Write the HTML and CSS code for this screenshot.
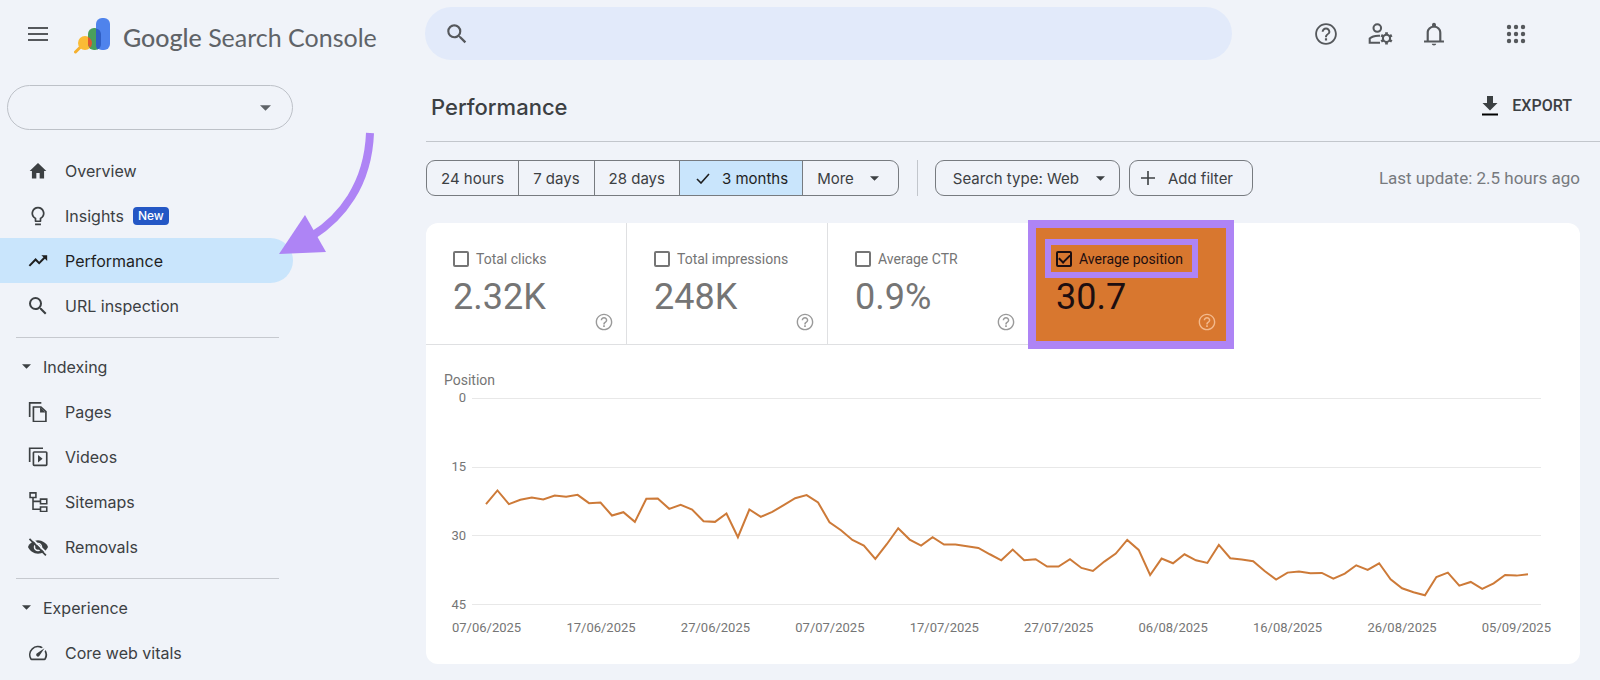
FILE: index.html
```html
<!DOCTYPE html>
<html lang="en">
<head>
<meta charset="utf-8">
<title>Google Search Console – Performance</title>
<link rel="stylesheet" href="styles.css">
</head>
<body>
<svg class="defs" aria-hidden="true">
  <symbol id="help" viewBox="0 0 24 24"><path d="M11 18h2v-2h-2v2zm1-16C6.480 2 2 6.480 2 12s4.480 10 10 10 10-4.480 10-10S17.520 2 12 2zm0 18.300c-4.600 0-8.300-3.700-8.300-8.300S7.400 3.700 12 3.700s8.300 3.700 8.300 8.300-3.700 8.300-8.300 8.300zM12 6c-2.210 0-4 1.790-4 4h1.800c0-1.200 1-2.200 2.200-2.200s2.200 1 2.200 2.200c0 2-3.100 1.750-3.100 5h1.800c0-2.250 3.100-2.500 3.100-5 0-2.210-1.790-4-4-4z"/></symbol>
  <symbol id="search" viewBox="0 0 24 24"><path d="M15.500 14h-.79l-.28-.27A6.471 6.471 0 0 0 16 9.500 6.500 6.500 0 1 0 9.500 16c1.610 0 3.090-.59 4.230-1.570l.27.28v.79l5 4.990L20.490 19l-4.990-5zm-6 0C7.010 14 5 11.990 5 9.500S7.010 5 9.500 5 14 7.010 14 9.500 11.990 14 9.500 14z"/></symbol>
  <symbol id="caret" viewBox="0 0 10 5"><path d="M0 0h10L5 5z"/></symbol>
</svg>

<header class="topbar">
  <div class="brand">
    <button class="icon-btn" aria-label="Main menu"><svg class="icon-menu" viewBox="0 0 20 14"><path d="M0 1h20M0 7h20M0 13h20" stroke="currentColor" stroke-width="2"/></svg></button>
    <a class="logo" href="#">
      <svg class="logo-mark" viewBox="0 0 36 36">
        <path d="M1.500 34l5-5" stroke="#f5b02e" stroke-width="3" stroke-linecap="round"/>
        <circle cx="11" cy="25" r="7" fill="#fabb35"/>
        <rect x="14" y="10" width="13" height="22" rx="6" fill="#4a9f5c"/>
        <path d="M14 19a7 7 0 0 1 4 6 7 7 0 0 1-2 4.700 6 6 0 0 1-2-4z" fill="#e0562f"/>
        <rect x="22" y="0" width="14" height="32" rx="6" fill="#4f83ec"/>
        <path d="M22 10.500a6 6 0 0 1 5 5.500v10a6 6 0 0 1-3.500 5.500A6 6 0 0 1 22 27z" fill="#2f5ec4"/>
      </svg>
      <span class="logo-text"><span class="logo-google">Google</span> Search Console</span>
    </a>
  </div>
  <label class="searchbox">
    <svg class="icon-search" viewBox="0 0 24 24"><use href="#search"/></svg>
    <input type="search" aria-label="Inspect any URL">
  </label>
  <div class="tools">
    <button class="icon-btn" aria-label="Help"><svg class="icon-tool" viewBox="0 0 24 24"><use href="#help"/></svg></button>
    <button class="icon-btn" aria-label="User settings"><svg class="icon-tool" viewBox="0 0 24 24" fill="none" stroke="currentColor" stroke-width="1.900"><circle cx="9.500" cy="6.500" r="3.500"/><path d="M12 13.600c-4-.3-7.500.6-9.500 2.600V20H12"/><circle cx="18" cy="16" r="3.300"/><path d="M18 10.300v2.500M18 19.200v2.500M13.100 13.200l2.200 1.200M20.700 17.600l2.200 1.200M13.100 18.800l2.200-1.200M20.700 14.400l2.200-1.200" stroke-width="2.500"/></svg></button>
    <button class="icon-btn" aria-label="Notifications"><svg class="icon-tool" viewBox="0 0 24 24"><path d="M12 22.500c1.100 0 2-.7 2-1.600h-4c0 .9.900 1.600 2 1.600zM18.800 18v-7.200c0-3.100-2-5.500-5-6.200V3.300C13.800 2.300 13 1.500 12 1.500s-1.800.8-1.800 1.800v1.300c-3 .7-5 3.100-5 6.200V18H2.800v1.900h18.400V18zm-2 0H7.200v-7.200c0-2.600 2-4.500 4.800-4.500s4.800 1.900 4.800 4.500z"/></svg></button>
    <button class="icon-btn apps" aria-label="Google apps"><svg class="icon-apps" viewBox="0 0 18 18"><g id="dots"><circle cx="2" cy="2" r="2.200"/><circle cx="9" cy="2" r="2.200"/><circle cx="16" cy="2" r="2.200"/></g><use href="#dots" y="7"/><use href="#dots" y="14"/></svg></button>
  </div>
</header>

<div class="layout">
  <aside class="sidebar">
    <button class="property" aria-label="Select property"><svg class="caret-lg"><use href="#caret"/></svg></button>
    <nav class="nav">
      <a class="item" href="#"><svg class="ico" viewBox="0 0 24 24"><path d="M10 21v-6.500h4V21h5.300v-9H22L12 2.500 2 12h2.700v9z"/></svg>Overview</a>
      <a class="item" href="#"><svg class="ico" viewBox="0 0 24 24"><path d="M8.500 23h7v-2h-7zM12 .8A7.800 7.800 0 0 0 8 15.300V18c0 .8.500 1.300 1.200 1.300h5.600c.7 0 1.200-.5 1.200-1.300V15.300A7.800 7.800 0 0 0 12 .8zm2.900 13-.9.600v2.900h-4v-2.900l-.9-.6A5.800 5.800 0 1 1 14.900 13.800z"/></svg>Insights<span class="badge">New</span></a>
      <a class="item active" href="#" aria-current="page"><svg class="ico" viewBox="0 0 24 24"><path d="M16 5l2.600 2.600-5.200 5.200-4.300-4.300L.8 17l1.700 1.700 6.600-6.700 4.300 4.300L20.300 9.300l2.700 2.700V5z"/></svg>Performance</a>
      <a class="item" href="#"><svg class="ico" viewBox="2 2 20 20"><use href="#search" width="24" height="24"/></svg>URL inspection</a>
      <hr class="rule">
      <button class="item group"><svg class="caret-md"><use href="#caret"/></svg>Indexing</button>
      <a class="item" href="#"><svg class="ico" viewBox="0 0 24 24" fill="none" stroke="currentColor" stroke-width="2"><path d="M2 18V1h14"/><path d="M6.500 6h9l6 5.500V23.500h-15z"/><path d="M14.500 6v6.500H21z" fill="currentColor" stroke="none"/></svg>Pages</a>
      <a class="item" href="#"><svg class="ico" viewBox="0 0 24 24" fill="none" stroke="currentColor" stroke-width="2"><path d="M2 18V1.500h16"/><rect x="6.500" y="6" width="16" height="16" rx="1"/><path d="M12 9.500v9l5.500-4.500z" fill="currentColor" stroke="none"/></svg>Videos</a>
      <a class="item" href="#"><svg class="ico" viewBox="0 0 24 24" fill="none" stroke="currentColor" stroke-width="1.900"><path d="M2.500 1h7v5.500h-7zM15 8.500h7.500V14H15zM15 18h7.500v5.500H15zM6 6.500v14.200h9M6 11.200h9"/></svg>Sitemaps</a>
      <a class="item" href="#"><svg class="ico" viewBox="0 0 24 24" fill="none" stroke="currentColor"><path d="M12 4C7 4 1.700 7.600 0 12c1.700 4.400 7 8 12 8s10.300-3.600 12-8C22.300 7.600 17 4 12 4z" fill="currentColor" stroke="none"/><circle cx="12" cy="12" r="4.200" stroke="#f0f3f9" stroke-width="1.800"/><path d="M4 1l19 19" stroke="#f0f3f9" stroke-width="2.200"/><path d="M1.800 2.200L21.500 22" stroke-width="2"/></svg>Removals</a>
      <hr class="rule">
      <button class="item group"><svg class="caret-md"><use href="#caret"/></svg>Experience</button>
      <a class="item" href="#"><svg class="ico" viewBox="1 1 22 22"><path d="M20.400 8.600l-1.200 1.800a8 8 0 0 1-.2 7.600H5A8 8 0 0 1 15.600 6.800l1.800-1.200A10 10 0 0 0 3.400 19c.3.600.9 1 1.600 1h14c.7 0 1.300-.4 1.700-1a10 10 0 0 0-.3-10.400zM10.600 15.400c.8.800 2 .8 2.800 0l5.700-8.500-8.500 5.700c-.8.800-.8 2 0 2.800z"/></svg>Core web vitals</a>
    </nav>
  </aside>

  <main class="main">
    <div class="title-row">
      <h1 class="title">Performance</h1>
      <button class="export"><svg class="icon-export" viewBox="0 0 16 20"><path d="M5 0h6v7h4.500L8 14.500.5 7H5z"/><path d="M0 17.500h16v2H0z" fill="#000"/></svg>EXPORT</button>
    </div>
    <div class="filters">
      <div class="segments" role="group" aria-label="Date range">
        <button class="seg">24 hours</button>
        <button class="seg">7 days</button>
        <button class="seg">28 days</button>
        <button class="seg on" aria-pressed="true"><svg class="icon-check" viewBox="0 0 14 11" fill="none" stroke="currentColor" stroke-width="1.600"><path d="M1 6l4 4 8-9"/></svg>3 months</button>
        <button class="seg more">More<svg class="caret-sm"><use href="#caret"/></svg></button>
      </div>
      <span class="vsep"></span>
      <button class="chip type">Search type: Web<svg class="caret-sm"><use href="#caret"/></svg></button>
      <button class="chip add"><svg class="icon-plus" viewBox="0 0 14 14"><path d="M7 0v14M0 7h14" stroke="currentColor" stroke-width="1.600"/></svg>Add filter</button>
      <span class="updated">Last update: 2.5 hours ago</span>
    </div>

    <section class="card">
      <div class="metrics">
        <div class="metric"><label class="check"><input type="checkbox">Total clicks</label><div class="value">2.32K</div><svg class="hint" viewBox="0 0 24 24"><use href="#help"/></svg></div>
        <div class="metric"><label class="check"><input type="checkbox">Total impressions</label><div class="value">248K</div><svg class="hint" viewBox="0 0 24 24"><use href="#help"/></svg></div>
        <div class="metric"><label class="check"><input type="checkbox">Average CTR</label><div class="value">0.9%</div><svg class="hint" viewBox="0 0 24 24"><use href="#help"/></svg></div>
        <div class="metric selected"><label class="check"><input type="checkbox" checked>Average position</label><div class="value">30.7</div><svg class="hint" viewBox="0 0 24 24"><use href="#help"/></svg></div>
      </div>
      <div class="chart">
        <div class="axis-title">Position</div>
        <div class="plot-row">
          <div class="y-axis"><span>0</span><span>15</span><span>30</span><span>45</span></div>
          <div class="plot">
            <div class="band"></div><div class="band"></div><div class="band"></div>
            <svg class="line" viewBox="0 0 91 617" preserveAspectRatio="none"><polyline points="0,318 1,277 2,318 3,305 4,298 5,304 6,292 7,296 8,290 9,315 10,313 11,352 12,342 13,371 14,302 15,301 16,332 17,320 18,334 19,369 20,371 21,346 22,417 23,334 24,356 25,341 26,321 27,300 28,291 29,313 30,372 31,396 32,425 33,442 34,482 35,438 36,390 37,424 38,442 39,417 40,439 41,439 42,444 43,449 44,468 45,486 46,454 47,486 48,483 49,505 50,505 51,483 52,509 53,518 54,490 55,466 56,425 57,455 58,530 59,481 60,495 61,468 62,486 63,494 64,440 65,480 66,484 67,489 68,518 69,544 70,523 71,520 72,525 73,524 74,541 75,526 76,501 77,515 78,495 79,543 80,570 81,582 82,591 83,536 84,523 85,562 86,551 87,572 88,555 89,530 90,532 91,528"/></svg>
          </div>
        </div>
        <div class="x-axis"><span>07/06/2025</span><span>17/06/2025</span><span>27/06/2025</span><span>07/07/2025</span><span>17/07/2025</span><span>27/07/2025</span><span>06/08/2025</span><span>16/08/2025</span><span>26/08/2025</span><span>05/09/2025</span></div>
      </div>
    </section>
  </main>
</div>
<svg class="arrow" viewBox="0 0 100 126" aria-hidden="true"><path d="M91 3C89 55 62 88 33 106" fill="none" stroke="#ae84f5" stroke-width="8"/><path d="M0 124L26 85l21 37z" fill="#ae84f5"/></svg>
</body>
</html>
```
FILE: styles.css
```css
* { box-sizing: border-box; }

body {
  margin: 0;
  background: #f0f3f9;
  color: #3c4043;
  font-family: Roboto, "Liberation Sans", sans-serif;
  font-size: 16px;
  min-height: 100vh;
  overflow: hidden;
  position: relative;
}

button {
  font: inherit;
  color: inherit;
  background: none;
  border: 0;
  padding: 0;
  cursor: pointer;
}

a { color: inherit; text-decoration: none; }
svg { display: block; flex: none; fill: currentColor; }
svg[fill="none"] { fill: none; }
.defs { position: absolute; width: 0; height: 0; }

/* Top bar */
.topbar { display: flex; height: 68px; align-items: center; color: #55585c; }
.brand { width: 425px; flex: none; display: flex; align-items: center; padding-left: 28px; gap: 26px; }
.icon-menu { width: 20px; height: 14px; }
.logo { display: flex; align-items: flex-start; gap: 13px; padding-top: 5px; }
.logo-mark { width: 36px; height: 36px; }
.logo-text { font-size: 25px; line-height: 38px; color: #5f6368; white-space: nowrap; font-family: Lato, sans-serif; }
.logo-google { font-weight: 500; }
.searchbox {
  flex: 0 1 807px;
  height: 53px;
  display: flex;
  align-items: center;
  gap: 12px;
  margin-bottom: 1px;
  padding: 0 19px;
  border-radius: 27px;
  background: #e2eafa;
}
.searchbox input { flex: 1; border: 0; background: none; outline: 0; font: inherit; }
.icon-search { width: 26px; height: 26px; }
.tools { display: flex; align-items: center; gap: 28px; margin-left: auto; padding-right: 75px; }
.icon-tool { width: 26px; height: 26px; }
.icon-apps { width: 18px; height: 18px; overflow: visible; }
.apps { margin-left: 32px; }

/* Sidebar */
.layout { display: flex; }
.sidebar { width: 293px; flex: none; padding-top: 17px; }
.property {
  display: flex;
  justify-content: flex-end;
  align-items: center;
  width: 286px;
  height: 45px;
  margin: 0 0 18px 7px;
  padding-right: 21px;
  border: 1px solid #bdc1c8;
  border-radius: 23px;
  color: #5f6368;
}
.caret-lg { width: 11px; height: 6px; }
.caret-md { width: 9px; height: 5px; }
.caret-sm { width: 9px; height: 5px; }
.item {
  display: flex;
  align-items: center;
  width: 100%;
  height: 45px;
  padding-left: 28px;
  gap: 17px;
  font-family: Inter, sans-serif;
  font-size: 16px;
}
.ico { width: 20px; height: 20px; }
.active { background: #c9e5fc; border-radius: 0 23px 23px 0; color: #1f1f1f; }
.group { padding-left: 22px; gap: 12px; }
.rule { border: 0; border-top: 1px solid #c6c9cf; margin: 9px 14px 6px 16px; }
.badge {
  margin-left: -8px;
  padding: 0 5px;
  border-radius: 4px;
  background: #2457c5;
  color: #fff;
  font-size: 12px;
  font-weight: 500;
  line-height: 18px;
}

/* Main column */
.main { flex: 1; min-width: 0; margin-left: 133px; }
.title-row {
  display: flex;
  align-items: center;
  justify-content: space-between;
  height: 74px;
  padding: 2px 28px 0 5px;
  border-bottom: 1px solid #c2c6cc;
}
.title { margin: 0; padding-top: 3px; font: 500 22px/30px Inter, sans-serif; }
.export { display: flex; align-items: center; gap: 14px; font-weight: 500; }
.icon-export { width: 16px; height: 20px; }
.filters { display: flex; align-items: center; padding: 18px 20px 0 0; font-family: Inter, sans-serif; font-size: 15px; }
.segments { display: flex; height: 36px; border: 1px solid #777b80; border-radius: 9px; overflow: hidden; }
.seg { display: flex; align-items: center; padding: 0 14px; border-left: 1px solid #777b80; white-space: nowrap; }
.seg:first-child { border-left: 0; }
.on { background: #c9e5fc; color: #1f1f1f; padding: 0 14px 0 16px; gap: 12px; }
.more { gap: 16px; padding-right: 19px; }
.icon-check { width: 14px; height: 11px; }
.vsep { width: 1px; height: 36px; margin: 0 17px 0 18px; background: #c2c6cc; }
.chip { display: flex; align-items: center; height: 36px; border: 1px solid #777b80; border-radius: 9px; white-space: nowrap; }
.type { padding: 0 14px 0 17px; gap: 17px; }
.add { margin-left: 9px; padding: 0 19px 0 11px; gap: 13px; }
.icon-plus { width: 14px; height: 14px; }
.updated { margin-left: auto; color: #777a7e; font-family: Roboto, sans-serif; font-size: 17px; }

/* Report card */
.card { margin: 27px 20px 16px 0; background: #fff; border-radius: 12px; }
.metrics { display: flex; }
.metric {
  position: relative;
  width: 201px;
  height: 122px;
  padding: 26px 0 0 27px;
  border-right: 1px solid #dfe0e2;
  border-bottom: 1px solid #dfe0e2;
  color: #757575;
}
.check { display: flex; align-items: center; gap: 7px; height: 20px; font-size: 14px; white-space: nowrap; }
.check input {
  appearance: none;
  width: 16px;
  height: 16px;
  margin: 0;
  border: 2px solid #757575;
  border-radius: 2px;
}
.value { font-size: 36px; line-height: 48px; margin-top: 4px; }
.hint { position: absolute; right: 12px; bottom: 12px; width: 20px; height: 20px; color: #9a9a9a; }
.selected { background: #d8772f; color: #1d0e10; border-color: transparent; }
.selected::before { content: ""; position: absolute; inset: -3px -5px -5px -1px; border: 8px solid #ae84f5; }
.selected .check { position: relative; width: 142px; }
.selected .check::before { content: ""; position: absolute; inset: -10px 0 -9px -11px; border: 6px solid #ae84f5; }
.selected .hint { color: #f3b98c; }
.check input:checked {
  border-color: #1d0e10;
  display: grid;
  place-items: center;
}
.check input:checked::before {
  content: "";
  width: 9px;
  height: 5px;
  border: solid #1d0e10;
  border-width: 0 0 2px 2px;
  rotate: -45deg;
  margin-bottom: 3px;
}

/* Chart */
.chart { padding: 26px 28px 26px 18px; color: #757575; font-size: 13px; }
.axis-title { font-size: 14px; line-height: 18px; }
.plot-row { display: flex; gap: 6px; }
.y-axis { width: 22px; display: flex; flex-direction: column; justify-content: space-between; text-align: right; line-height: 18px; }
.plot { flex: 1; position: relative; margin: 9px 11px 9px 0; border-bottom: 1px solid #e8e8e8; }
.band { height: 69px; border-top: 1px solid #e8e8e8; }
.band:nth-child(2) { height: 68px; }
.line { position: absolute; left: 14px; top: 0; width: calc(100% - 27px); height: 100%; overflow: visible; }
.line polyline { fill: none; stroke: #cd7a38; stroke-width: 2; vector-effect: non-scaling-stroke; }
.x-axis { display: flex; justify-content: space-between; margin: 4px 1px 0 8px; line-height: 20px; }

.arrow { position: absolute; left: 279px; top: 130px; width: 100px; height: 126px; }
```
